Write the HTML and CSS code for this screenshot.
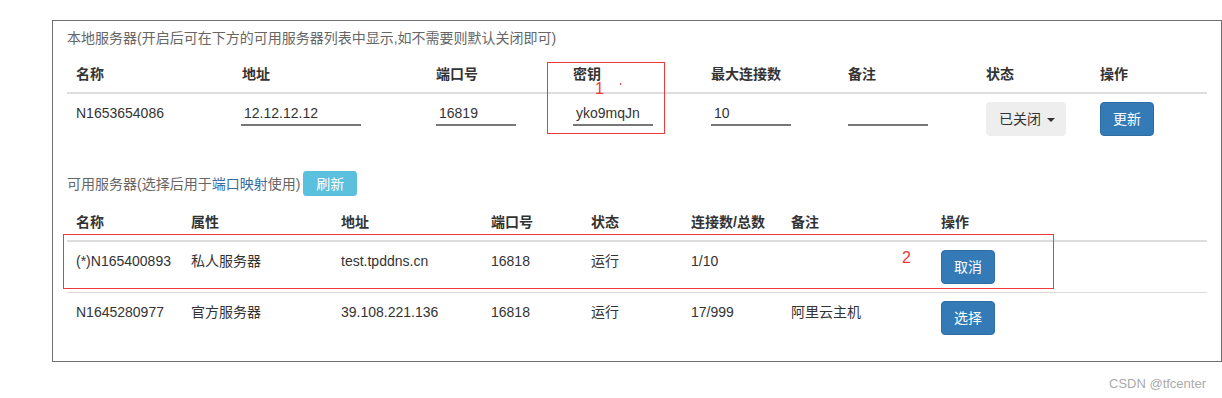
FILE: index.html
```html
<!DOCTYPE html>
<html lang="zh-CN">
<head>
    <meta charset="UTF-8">
    <title>服务器设置</title>
    <link rel="stylesheet" href="styles.css">
</head>
<body>
    <div class="panel">
        <div class="panel-title">本地服务器(开启后可在下方的可用服务器列表中显示,如不需要则默认关闭即可)</div>
        <table class="table local-table">
            <thead>
                <tr>
                    <th>名称</th>
                    <th>地址</th>
                    <th>端口号</th>
                    <th>密钥</th>
                    <th>最大连接数</th>
                    <th>备注</th>
                    <th>状态</th>
                    <th>操作</th>
                </tr>
            </thead>
            <tbody>
                <tr>
                    <td>N1653654086</td>
                    <td><input class="line-input" type="text" value="12.12.12.12"></td>
                    <td><input class="line-input short" type="text" value="16819"></td>
                    <td><input class="line-input short" type="text" value="yko9mqJn"></td>
                    <td><input class="line-input short" type="text" value="10"></td>
                    <td><input class="line-input short" type="text" value=""></td>
                    <td><button class="btn btn-default">已关闭 <span class="caret"></span></button></td>
                    <td><button class="btn btn-primary">更新</button></td>
                </tr>
            </tbody>
        </table>

        <div class="section-line">
            <span>可用服务器(选择后用于<span class="hl">端口映射</span>使用)</span>
            <button class="btn btn-info btn-sm">刷新</button>
        </div>
        <table class="table server-table">
            <thead>
                <tr>
                    <th>名称</th>
                    <th>属性</th>
                    <th>地址</th>
                    <th>端口号</th>
                    <th>状态</th>
                    <th>连接数/总数</th>
                    <th>备注</th>
                    <th>操作</th>
                </tr>
            </thead>
            <tbody>
                <tr>
                    <td>(*)N165400893</td>
                    <td>私人服务器</td>
                    <td>test.tpddns.cn</td>
                    <td>16818</td>
                    <td>运行</td>
                    <td>1/10</td>
                    <td></td>
                    <td><button class="btn btn-primary">取消</button></td>
                </tr>
                <tr>
                    <td>N1645280977</td>
                    <td>官方服务器</td>
                    <td>39.108.221.136</td>
                    <td>16818</td>
                    <td>运行</td>
                    <td>17/999</td>
                    <td>阿里云主机</td>
                    <td><button class="btn btn-primary">选择</button></td>
                </tr>
            </tbody>
        </table>
    </div>

    <div class="watermark">CSDN @tfcenter</div>

    <!-- 标注 -->
    <div class="mark mark-1"></div>
    <span class="mark-num num-1">1</span>
    <span class="mark-dot"></span>
    <div class="mark mark-2"></div>
    <span class="mark-num num-2">2</span>
</body>
</html>
```

FILE: styles.css
```css
body {
    margin: 0;
    position: relative;
    height: 398px;
    overflow: hidden;
    font-family: "Liberation Sans", "Noto Sans CJK SC", sans-serif;
    font-size: 14px;
    line-height: 20px;
    color: #333;
    background: #fff;
}
.panel {
    margin: 20px 0 0 52px;
    width: 1141px;
    padding: 7px 13px 18px 14px;
    border: 1px solid #707070;
}
.panel-title {
    color: #666;
    margin-bottom: 7px;
}
.table {
    width: 1140px;
    border-collapse: collapse;
    table-layout: fixed;
}
.table th,
.table td {
    box-sizing: border-box;
    padding: 9px 9px 8px;
    text-align: left;
    vertical-align: top;
    white-space: nowrap;
}
.table th {
    font-weight: bold;
    border-bottom: 2px solid #ddd;
}
.table tbody tr + tr td {
    border-top: 1px solid #ddd;
}
.local-table th:nth-child(1) { width: 166px; }
.local-table th:nth-child(2) { width: 194px; }
.local-table th:nth-child(3) { width: 137px; }
.local-table th:nth-child(4) { width: 138px; }
.local-table th:nth-child(5) { width: 137px; }
.local-table th:nth-child(6) { width: 138px; }
.local-table th:nth-child(7) { width: 114px; }
.local-table th:nth-child(8) { width: 116px; }
.server-table th:nth-child(1) { width: 115px; }
.server-table th:nth-child(2) { width: 150px; }
.server-table th:nth-child(3) { width: 150px; }
.server-table th:nth-child(4) { width: 100px; }
.server-table th:nth-child(5) { width: 100px; }
.server-table th:nth-child(6) { width: 100px; }
.server-table th:nth-child(7) { width: 150px; }
.server-table th:nth-child(8) { width: 275px; }
.line-input {
    display: block;
    box-sizing: border-box;
    width: 120px;
    height: 25px;
    margin: -2px 0 0 -1px;
    padding: 0 3px;
    border: none;
    border-bottom: 2px solid #777;
    font-family: inherit;
    font-size: 14px;
    line-height: 20px;
    color: #333;
    background: transparent;
    outline: none;
}
.line-input.short {
    width: 80px;
    margin-left: 0;
}
.btn {
    display: inline-block;
    box-sizing: border-box;
    height: 34px;
    padding: 6px 12px;
    margin-top: -1px;
    font-family: inherit;
    font-size: 14px;
    line-height: 20px;
    border: 1px solid transparent;
    border-radius: 4px;
    cursor: pointer;
}
.btn-default {
    width: 80px;
    color: #333;
    background: #eee;
    border-color: #eee;
}
.btn-primary {
    width: 54px;
    color: #fff;
    background: #337ab7;
    border-color: #2e6da4;
}
.btn-info {
    color: #fff;
    background: #5bc0de;
    border-color: #5bc0de;
}
.btn-sm {
    width: 54px;
    height: 25px;
    padding: 2px 10px;
    margin: 0;
    border-radius: 3px;
}
.caret {
    display: inline-block;
    width: 0;
    height: 0;
    margin-left: 2px;
    vertical-align: middle;
    border-top: 4px solid #333;
    border-left: 4px solid transparent;
    border-right: 4px solid transparent;
}
.section-line {
    display: flex;
    align-items: center;
    gap: 3px;
    margin: 27px 0 7px;
    height: 25px;
    color: #666;
}
.section-line .hl {
    color: #3a6aa0;
}
.watermark {
    position: absolute;
    right: 16px;
    top: 374px;
    font-size: 13px;
    color: #aaa;
}
.mark {
    position: absolute;
    border: 1px solid #f03a3a;
}
.mark-1 {
    left: 547px;
    top: 62px;
    width: 116px;
    height: 70px;
}
.mark-2 {
    left: 63px;
    top: 234px;
    width: 989px;
    height: 53px;
}
.mark-num {
    position: absolute;
    color: #f03a3a;
    font-size: 16px;
    line-height: 16px;
}
.num-1 {
    left: 595px;
    top: 81px;
}
.num-2 {
    left: 902px;
    top: 250px;
}
.mark-dot {
    position: absolute;
    left: 620px;
    top: 83px;
    width: 1px;
    height: 2px;
    background: #f03a3a;
}
```
